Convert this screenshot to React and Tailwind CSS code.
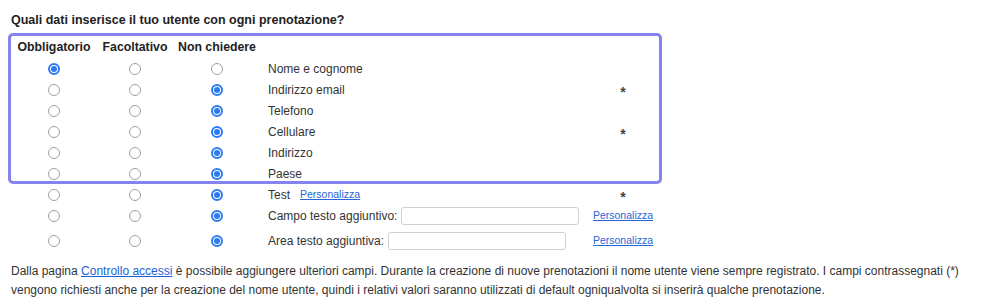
const FONT = { fontFamily: '"Liberation Sans", Arial, Helvetica, sans-serif' };

const FIELDS = [
  { label: "Nome e cognome", choice: 0 },
  { label: "Indirizzo email", choice: 2, required: true },
  { label: "Telefono", choice: 2 },
  { label: "Cellulare", choice: 2, required: true },
  { label: "Indirizzo", choice: 2 },
  { label: "Paese", choice: 2 },
  { label: "Test", choice: 2, required: true, link: true },
  { label: "Campo testo aggiuntivo:", choice: 2, input: true },
  { label: "Area testo aggiuntiva:", choice: 2, input: true, tall: true },
];

function Radio({ checked }) {
  if (checked) {
    return (
      <span className="flex h-[12px] w-[12px] items-center justify-center rounded-full border-[2px] border-[#2d7bf4] bg-white">
        <span className="h-[6px] w-[6px] rounded-full bg-[#2d7bf4]" />
      </span>
    );
  }
  return <span className="h-[12px] w-[12px] rounded-full border border-[#a0a0a0] bg-white" />;
}

function FieldRow({ field }) {
  return (
    <div
      className={`grid grid-cols-[86px_76px_88px_325px_74px] items-center ${
        field.tall ? "mt-[3px] h-[23px]" : "h-[21px]"
      }`}
    >
      {[0, 1, 2].map((i) => (
        <div key={i} className="flex justify-center">
          <Radio checked={field.choice === i} />
        </div>
      ))}
      <div className="flex items-center pl-[7px] text-[12px] text-[#333]">
        <span>{field.label}</span>
        {field.link ? (
          <a href="#" className="ml-[10px] text-[10.5px] text-[#2566d6] underline">
            Personalizza
          </a>
        ) : null}
        {field.input ? (
          <span className="ml-[4px] h-[18px] w-[178px] rounded-[3px] border border-[#d0d0d0] bg-white" />
        ) : null}
      </div>
      <div className="flex justify-center">
        {field.input ? (
          <a href="#" className="text-[10.5px] text-[#2566d6] underline">
            Personalizza
          </a>
        ) : field.required ? (
          <span className="relative top-[2px] text-[14px] font-bold leading-none text-[#444]">*</span>
        ) : null}
      </div>
    </div>
  );
}

export default function App() {
  return (
    <div className="min-h-[304px] bg-white px-[11px] pt-[12px]" style={FONT}>
      <h2 className="mb-[9px] text-[12.5px] font-bold leading-[16px] text-[#222]">
        Quali dati inserisce il tuo utente con ogni prenotazione?
      </h2>

      <div className="relative">
        <div className="grid h-[21px] grid-cols-[86px_76px_88px_325px_74px] items-center text-[12.3px] font-bold text-[#222]">
          <div className="text-center">Obbligatorio</div>
          <div className="text-center">Facoltativo</div>
          <div className="text-center">Non chiedere</div>
        </div>

        {FIELDS.map((field) => (
          <FieldRow key={field.label} field={field} />
        ))}

        {/* highlight frame over the first six fields */}
        <div className="pointer-events-none absolute left-[-3px] top-[-4px] h-[151px] w-[654px] rounded-[5px] border-[3px] border-[#8583ee]" />
      </div>

      <p className="mt-[10px] text-[12px] leading-[19px] text-[#333]">
        Dalla pagina{" "}
        <a href="#" className="text-[#1a5fd6] underline">
          Controllo accessi
        </a>{" "}
        è possibile aggiungere ulteriori campi. Durante la creazione di nuove prenotazioni il nome utente viene
        sempre registrato. I campi contrassegnati (*)
        <br />
        vengono richiesti anche per la creazione del nome utente, quindi i relativi valori saranno utilizzati di
        default ogniqualvolta si inserirà qualche prenotazione.
      </p>
    </div>
  );
}
